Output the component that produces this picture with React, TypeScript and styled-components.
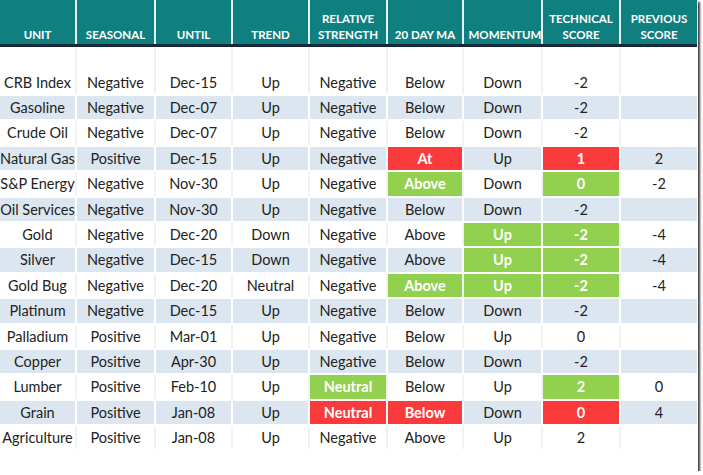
import styled, { createGlobalStyle } from "styled-components";

type Tone = "plain" | "red" | "green";

interface CellData {
  text: string;
  tone?: Tone;
}

const GlobalStyle = createGlobalStyle`
  html, body {
    margin: 0;
    padding: 0;
    background: #ffffff;
  }
  body {
    font-family: Lato, "Open Sans", "Liberation Sans", sans-serif;
  }
`;

const COLUMNS = "75px 77px 75px 75px 76px 74px 77px 76px 76px";

const headers = [
  "UNIT",
  "SEASONAL",
  "UNTIL",
  "TREND",
  "RELATIVE STRENGTH",
  "20 DAY MA",
  "MOMENTUM",
  "TECHNICAL SCORE",
  "PREVIOUS SCORE",
];

const r = (text: string): CellData => ({ text, tone: "red" });
const g = (text: string): CellData => ({ text, tone: "green" });
const p = (text: string): CellData => ({ text });

const rows: CellData[][] = [
  ["CRB Index", "Negative", "Dec-15", "Up", "Negative", "Below", "Down", "-2", ""].map(p),
  ["Gasoline", "Negative", "Dec-07", "Up", "Negative", "Below", "Down", "-2", ""].map(p),
  ["Crude Oil", "Negative", "Dec-07", "Up", "Negative", "Below", "Down", "-2", ""].map(p),
  [p("Natural Gas"), p("Positive"), p("Dec-15"), p("Up"), p("Negative"), r("At"), p("Up"), r("1"), p("2")],
  [p("S&P Energy"), p("Negative"), p("Nov-30"), p("Up"), p("Negative"), g("Above"), p("Down"), g("0"), p("-2")],
  ["Oil Services", "Negative", "Nov-30", "Up", "Negative", "Below", "Down", "-2", ""].map(p),
  [p("Gold"), p("Negative"), p("Dec-20"), p("Down"), p("Negative"), p("Above"), g("Up"), g("-2"), p("-4")],
  [p("Silver"), p("Negative"), p("Dec-15"), p("Down"), p("Negative"), p("Above"), g("Up"), g("-2"), p("-4")],
  [p("Gold Bug"), p("Negative"), p("Dec-20"), p("Neutral"), p("Negative"), g("Above"), g("Up"), g("-2"), p("-4")],
  ["Platinum", "Negative", "Dec-15", "Up", "Negative", "Below", "Down", "-2", ""].map(p),
  ["Palladium", "Positive", "Mar-01", "Up", "Negative", "Below", "Up", "0", ""].map(p),
  ["Copper", "Positive", "Apr-30", "Up", "Negative", "Below", "Down", "-2", ""].map(p),
  [p("Lumber"), p("Positive"), p("Feb-10"), p("Up"), g("Neutral"), p("Below"), p("Up"), g("2"), p("0")],
  [p("Grain"), p("Positive"), p("Jan-08"), p("Up"), r("Neutral"), r("Below"), p("Down"), r("0"), p("4")],
  ["Agriculture", "Positive", "Jan-08", "Up", "Negative", "Above", "Up", "2", ""].map(p),
];

export default function App() {
  return (
    <>
      <GlobalStyle />
      <Frame>
        <HeaderRow>
          {headers.map((h) => (
            <HeaderCell key={h}>
              <span>{h}</span>
            </HeaderCell>
          ))}
        </HeaderRow>
        <HeaderRule />
        <Body>
          {rows.map((row, i) => (
            <Row key={row[0].text} banded={i % 2 === 1} first={i === 0}>
              {row.map((cell, j) => (
                <Cell key={j} banded={i % 2 === 1} tone={cell.tone ?? "plain"}>
                  {cell.text}
                </Cell>
              ))}
            </Row>
          ))}
        </Body>
      </Frame>
    </>
  );
}

// Outer picture frame with the drop shadow on right and bottom
const Frame = styled.div`
  width: 698px;
  height: 471px;
  background: #ffffff;
  box-shadow: 2px 2px 2px rgba(30, 30, 30, 0.85);
  overflow: hidden;
`;

const HeaderRow = styled.div`
  display: grid;
  grid-template-columns: ${COLUMNS};
  column-gap: 2px;
  background: #e4f4f4;
  height: 44px;
`;

const HeaderCell = styled.div`
  background: #0f7f7f;
  color: #ffffff;
  font-weight: 700;
  font-size: 11.5px;
  line-height: 16px;
  text-align: center;
  display: flex;
  align-items: flex-end;
  justify-content: center;
  padding: 0 2px 1px;
  box-sizing: border-box;

  span {
    display: block;
    max-width: 68px;
  }
`;

const HeaderRule = styled.div`
  height: 3px;
  width: 697px;
  background: #15283a;
`;

const Body = styled.div`
  display: flex;
  flex-direction: column;
  gap: 2px;
  width: 697px;
`;

interface RowProps {
  banded: boolean;
  first: boolean;
}

const Row = styled.div<RowProps>`
  display: grid;
  grid-template-columns: ${COLUMNS};
  column-gap: 2px;
  background: ${(props) => (props.banded ? "#ffffff" : "#f1f2f3")};
  height: ${(props) => (props.first ? "47px" : "23.4px")};
  align-items: stretch;
`;

interface CellProps {
  banded: boolean;
  tone: Tone;
}

const toneBg = (props: CellProps) => {
  if (props.tone === "red") return "#fb3b3b";
  if (props.tone === "green") return "#92d050";
  return props.banded ? "#dce6f1" : "#ffffff";
};

const Cell = styled.div<CellProps>`
  background: ${toneBg};
  color: ${(props) => (props.tone === "plain" ? "#222222" : "#ffffff")};
  font-weight: ${(props) => (props.tone === "plain" ? 400 : 700)};
  font-size: 14.5px;
  line-height: 23.4px;
  text-align: center;
  white-space: nowrap;
  display: flex;
  align-items: flex-end;
  justify-content: center;
`;
